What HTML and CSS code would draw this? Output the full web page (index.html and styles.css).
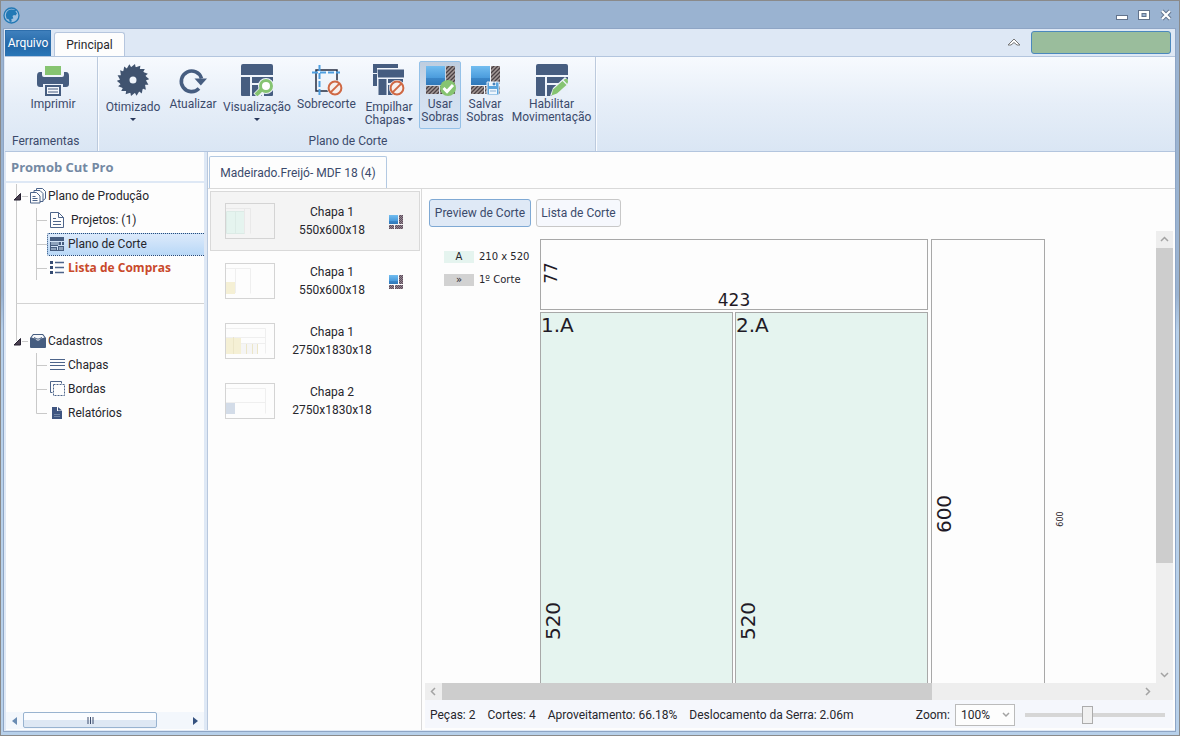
FILE: index.html
```html
<!DOCTYPE html>
<html lang="pt-BR">
<head>
<meta charset="utf-8">
<title>Promob Cut Pro</title>
<link rel="stylesheet" href="styles.css">
</head>
<body>
<svg class="defs" aria-hidden="true">
  <defs>
    <linearGradient id="blue" x1="0" y1="0" x2="0" y2="1">
      <stop offset="0" stop-color="#72bdf0"/><stop offset=".64" stop-color="#4a9bdc"/><stop offset=".65" stop-color="#3a86c8"/><stop offset="1" stop-color="#2f78b9"/>
    </linearGradient>
    <pattern id="hatch" width="4" height="4" patternUnits="userSpaceOnUse">
      <rect width="4" height="4" fill="#a39896"/><path d="M-1 5L5 -1M-1 1L1 -1M3 5L5 3" stroke="#4a4044" stroke-width="1.3"/>
    </pattern>
    <pattern id="weave" width="2" height="2" patternUnits="userSpaceOnUse">
      <rect width="2" height="2" fill="#958791"/><path d="M0 0h1v1H0zM1 1h1v1H1z" fill="#5d4c5c"/>
    </pattern>
    <symbol id="scraps" viewBox="0 0 30 30">
      <rect x="0" y="1" width="19" height="19" fill="url(#blue)"/>
      <path d="M20 1h9v18h-9zM0 21h13v8H0zM14 21h15v8H14z" fill="url(#hatch)"/>
    </symbol>
    <symbol id="scrap-small" viewBox="0 0 15 15">
      <rect width="9" height="9" y="1" fill="url(#blue)"/>
      <path d="M10 1h4v9h-4zM0 11h5v4H0zM6 11h8v4H6z" fill="url(#weave)"/>
    </symbol>
    <symbol id="panels" viewBox="0 0 32 32">
      <path d="M0 2q0-2 2-2h28q2 0 2 2v9H0zM0 13h9v19H1q-1 0-1-1zM11 13h21v6H11zM11 21h10v11H11zM23 21h9v10q0 1-1 1h-8z"/>
    </symbol>
    <symbol id="forbid" viewBox="0 0 16 16">
      <circle cx="8" cy="8" r="8" fill="#eef3fa"/><circle cx="8" cy="8" r="6.4" fill="#f6f0ee" stroke="#cf6844" stroke-width="2"/><path d="M3.6 12.4l8.8-8.8" stroke="#cf6844" stroke-width="2"/>
    </symbol>
  </defs>
</svg>
<div class="window">
  <header class="titlebar">
    <svg class="logo" width="17" height="17" viewBox="0 0 17 17"><circle cx="8.500" cy="8.500" r="7.500" fill="#9fc0df" stroke="#2279b5" stroke-width="1.300"/><path d="M3.500 11.500L2.800 8Q3.500 3 8 2.500L13.500 3l-1 1.500 1.500 2-1.500 2-1.500-.5-1.500 1 .8 2.500-2 .5.500 2.500-2 .5-.8-2.500z" fill="#2279b5"/></svg>
    <div class="controls">
      <button type="button" aria-label="Minimizar"><svg width="13" height="12"><rect x=".5" y="6.500" width="11" height="4" fill="#fff" stroke="#62738c"/></svg></button>
      <button type="button" aria-label="Maximizar"><svg width="13" height="12"><rect x=".5" y="1.500" width="11" height="9" fill="#fff" stroke="#62738c"/><rect x="4" y="4.500" width="4" height="3" fill="#9ab3d1" stroke="#62738c"/></svg></button>
      <button type="button" aria-label="Fechar"><svg width="13" height="12"><path d="M2 2l8 8M10 2l-8 8" stroke="#62738c" stroke-width="4"/><path d="M2 2l8 8M10 2l-8 8" stroke="#fff" stroke-width="2.200"/></svg></button>
    </div>
  </header>

  <div class="frame">
    <nav class="tabs">
      <button type="button" class="file-tab">Arquivo</button>
      <button type="button" class="ribbon-tab">Principal</button>
      <button type="button" class="collapse" aria-label="Recolher"><svg width="14" height="8" viewBox="0 0 14 8"><path d="M1 7L7 1l6 6h-3L7 4.500 4 7z" fill="#fff" stroke="#777" stroke-width="1"/></svg></button>
      <div class="license"></div>
    </nav>

    <div class="ribbon">
      <section class="group tools">
        <div class="group-items">
          <button type="button" class="tool">
            <svg width="32" height="32" viewBox="0 0 32 32"><path d="M8 2h16v9H8z" fill="#86c471"/><path d="M3 8h2v3q0 2 2 2h18q2 0 2-2V8h2q3 0 3 4v8q0 3-3 3h-3v-3H6v3H3q-3 0-3-3v-8q0-4 3-4z" fill="#465d80"/><path d="M9 22h14v9H9z" fill="#f4f7fb" stroke="#465d80" stroke-width="2"/><path d="M11 25h10M11 28h10" stroke="#465d80" stroke-width="1.200"/></svg>
            <span>Imprimir</span>
          </button>
        </div>
        <h2>Ferramentas</h2>
      </section>
      <section class="group cutting">
        <div class="group-items">
          <button type="button" class="tool low">
            <svg width="32" height="32" viewBox="0 0 32 32"><g fill="#40536f"><path fill-rule="evenodd" d="M16 3a13 13 0 1 0 0 26a13 13 0 1 0 0-26zM16 12.500a3.500 3.500 0 1 1 0 7a3.500 3.500 0 1 1 0-7z"/><g id="teeth"><path id="tooth" d="M13 4L18 0l1 5z"/><use href="#tooth" transform="rotate(20 16 16)"/><use href="#tooth" transform="rotate(40 16 16)"/><use href="#tooth" transform="rotate(60 16 16)"/><use href="#tooth" transform="rotate(80 16 16)"/><use href="#tooth" transform="rotate(100 16 16)"/></g><use href="#teeth" transform="rotate(120 16 16)"/><use href="#teeth" transform="rotate(240 16 16)"/></g></svg>
            <span>Otimizado</span><i class="arrow"></i>
          </button>
          <button type="button" class="tool">
            <svg width="32" height="32" viewBox="0 0 32 32"><path d="M22 24.500A10.300 10.300 0 1 1 24.500 14.500" fill="none" stroke="#465d80" stroke-width="3.600"/><path d="M17.500 14.500H30l-6.200 7z" fill="#465d80"/></svg>
            <span>Atualizar</span>
          </button>
          <button type="button" class="tool low">
            <svg width="32" height="32" viewBox="0 0 32 32"><use href="#panels" fill="#465d80"/><path d="M15 32l6-6" stroke="#eef3fa" stroke-width="7"/><circle cx="25" cy="22" r="8" fill="#eef3fa"/><path d="M15 31l6-6" stroke="#86c471" stroke-width="4"/><circle cx="25" cy="22" r="5.500" fill="#fff" stroke="#86c471" stroke-width="3"/></svg>
            <span>Visualização</span><i class="arrow"></i>
          </button>
          <button type="button" class="tool">
            <svg width="32" height="32" viewBox="0 0 32 32"><path d="M5 6h21v21H5z" fill="none" stroke="#252d40" stroke-width="1.500"/><path d="M8.500 1v30M1 8.500h28" stroke="#4d9ee0" stroke-width="2" stroke-dasharray="6 2"/><use href="#forbid" x="16" y="16" width="16" height="16"/></svg>
            <span>Sobrecorte</span>
          </button>
          <button type="button" class="tool low">
            <svg width="32" height="32" viewBox="0 0 32 32"><g fill="#465d80"><path d="M0 0h25v4H4v5H0zM0 10h4v12H0zM4.500 5.500H31v8h-26zM5.500 15h8v16h-8zM15 15h15v4H15zM15 21h6v10h-6z"/></g><use href="#forbid" x="16" y="16" width="16" height="16"/></svg>
            <span>Empilhar<br>Chapas<i class="arrow inline"></i></span>
          </button>
          <button type="button" class="tool active">
            <svg width="32" height="32" viewBox="0 0 32 32"><use href="#scraps" width="30" height="30" x="2" y="1"/><circle cx="24" cy="24" r="8" fill="#86c471"/><path d="M19.500 24l3.500 3.500 6-6.500" fill="none" stroke="#fff" stroke-width="3"/></svg>
            <span>Usar<br>Sobras</span>
          </button>
          <button type="button" class="tool">
            <svg width="32" height="32" viewBox="0 0 32 32"><use href="#scraps" width="30" height="30" x="2" y="1"/><path d="M18 18h12v13H18z" fill="#5aa4dc" stroke="#e7eef8"/><path d="M20 18h7v4h-7zM20 25h8v5h-8z" fill="#eef6fd"/><path d="M24 19h2v2h-2zM21 27h6" fill="#4684bd" stroke="#4684bd" stroke-width=".6"/></svg>
            <span>Salvar<br>Sobras</span>
          </button>
          <button type="button" class="tool">
            <svg width="32" height="32" viewBox="0 0 32 32"><use href="#panels" fill="#465d80"/><path d="M15 32l17-15v15z" fill="#e9f0f9"/><path d="M14 32l3-8L29 13l5 5-12 11z" fill="#eef3fa"/><path d="M15.500 31.500l1.500-6L26.500 17l4 4-9.500 8.500z" fill="#86c471"/><path d="M27.500 16l1.500-1q3-1 3 3l-.8 2z" fill="#86c471"/></svg>
            <span>Habilitar<br>Movimentação</span>
          </button>
        </div>
        <h2>Plano de Corte</h2>
      </section>
    </div>

    <div class="workspace">
      <aside class="sidebar">
        <h1>Promob Cut Pro</h1>
        <div class="tree">
          <a href="#" class="node root"><svg class="twig" width="17" height="24"><path d="M4.500 0v24M10 12.500h6" stroke="#c9c9c9"/><path d="M2 16l6.500-6.500V16z" fill="#4a4050" stroke="#252030"/></svg><svg width="16" height="16" fill="#fdfdfd" stroke="#4d648a"><path d="M6.500.5h6l3 3v7l-2 1.500h-7z"/><path d="M4 2.500h6l3 3v8H4z"/><path d="M.5 4.500h6l3.500 3.500v7H.5z"/><path d="M2.500 8.500h3M2.500 10.500h5M2.500 12.500h5"/></svg><span>Plano de Produção</span></a>
          <a href="#" class="node"><svg class="twig" width="35" height="24"><path d="M4.500 0v24M24.500 0v24M25 12.500h10" stroke="#c9c9c9"/></svg><svg width="16" height="16" fill="#fdfdfd" stroke="#4d648a"><path d="M.5.500h8l5 5v10H.5z"/><path d="M8.500.500v5h5M3 6.500h3M3 9.500h8M3 12.500h8" fill="none"/></svg><span class="wide">Projetos: (1)</span></a>
          <a href="#" class="node selected"><svg class="twig" width="35" height="24"><path d="M4.500 0v24M24.500 0v24M25 12.500h10" stroke="#c9c9c9"/></svg><span class="pick"><svg width="16" height="16"><path d="M0 1h14v14H0z" fill="#465d80"/><path d="M0 5.500h14M1 10.500h6M8 9.500h6M7.500 10v4M11.500 6v4" stroke="#cfe1f5"/><path d="M1 6h8v3H1zM1 12h5v2H1zM9 11h4v3H9z" fill="#8da2bc"/></svg><span>Plano de Corte</span></span></a>
          <a href="#" class="node alert"><svg class="twig" width="35" height="24"><path d="M4.500 0v24M24.500 0v24M25 12.500h10" stroke="#c9c9c9"/></svg><svg width="16" height="16"><path d="M0 1h3v3H0zM0 6h3v3H0zM0 11h3v3H0z" fill="#354b72"/><path d="M5 2.500h9M5 7.500h9M5 12.500h9" stroke="#4d648a" stroke-width="1.500"/></svg><span>Lista de Compras</span></a>
          <div class="divider"></div>
          <div class="stem"></div>
          <a href="#" class="node root"><svg class="twig" width="17" height="24"><path d="M4.500 0v12M10 12.500h6" stroke="#c9c9c9"/><path d="M2 16l6.500-6.500V16z" fill="#4a4050" stroke="#252030"/></svg><svg width="16" height="16"><path d="M0 5l3-4h10l3 4v9q0 1-1 1H1q-1 0-1-1z" fill="#465d80"/><path d="M1.500 4.500L3.500 2h9l2 2.500-3.500 1-2 2H7l-2-2z" fill="#f6f8fb"/><path d="M4 4.500l3 1.500h2l3-1.500" fill="none" stroke="#465d80"/></svg><span>Cadastros</span></a>
          <a href="#" class="node"><svg class="twig" width="35" height="24"><path d="M24.500 0v24M25 12.500h10" stroke="#c9c9c9"/></svg><svg width="16" height="16" stroke="#4d648a"><path d="M0 2.500h15M0 5.500h15M0 8.500h15M0 12.500h15"/></svg><span>Chapas</span></a>
          <a href="#" class="node"><svg class="twig" width="35" height="24"><path d="M24.500 0v24M25 12.500h10" stroke="#c9c9c9"/></svg><svg width="16" height="16" fill="none" stroke="#4d648a"><path d="M2.500 11.500h-2V.5h11v2"/><path d="M3.500 3.500h11v11h-11z" stroke-dasharray="2 1"/></svg><span>Bordas</span></a>
          <a href="#" class="node"><svg class="twig" width="35" height="24"><path d="M24.500 0v12.500H35" fill="none" stroke="#c9c9c9"/></svg><svg width="16" height="16"><path d="M2 2h5v4h5v8H2z" fill="#3f5580"/><path d="M8 2l4 3.500H8z" fill="#3f5580"/><path d="M4 9.500h6M4 11.500h6" stroke="#7286a5"/></svg><span>Relatórios</span></a>
        </div>
        <div class="side-scroll">
          <button type="button" aria-label="Esquerda"><svg width="5" height="8"><path d="M5 0v8L0 4z" fill="#6a8cb3"/></svg></button>
          <div class="side-track"><div class="side-thumb"><svg width="7" height="7"><path d="M1 0v7M3.500 0v7M6 0v7" stroke="#3c4c6d"/></svg></div></div>
          <button type="button" aria-label="Direita"><svg width="5" height="8"><path d="M0 0v8l5-4z" fill="#35527f"/></svg></button>
        </div>
      </aside>

      <main class="document">
        <div class="doc-tabs"><button type="button" class="doc-tab">Madeirado.Freijó- MDF 18 (4)</button></div>
        <div class="doc-body">
          <div class="sheets">
            <button type="button" class="sheet current">
              <svg class="thumb" width="50" height="36"><path d="M.5 7.500h18V29.500H.5zM9.500 7.500v22" fill="#e5f4ef" stroke="#dcebe6"/><path d="M0 4.500h24.500v25M18.500 4v25" fill="none" stroke="#e9e9e9"/></svg>
              <span>Chapa 1<br>550x600x18</span><svg width="15" height="15"><use href="#scrap-small" width="15" height="15"/></svg>
            </button>
            <button type="button" class="sheet">
              <svg class="thumb" width="50" height="36"><path d="M0 18h9v12H0z" fill="#f5f0d5"/><path d="M0 4.500h24.500v25M9.500 4v25" fill="none" stroke="#efefef"/></svg>
              <span>Chapa 1<br>550x600x18</span><svg width="15" height="15"><use href="#scrap-small" width="15" height="15"/></svg>
            </button>
            <button type="button" class="sheet">
              <svg class="thumb" width="50" height="36"><path d="M0 13h15v17H0z" fill="#f5f0d5"/><path d="M15 20h17v10H15z" fill="#f5f5f5"/><path d="M0 4.500h39.500v25M0 13.500h39M15 19.500h24" fill="none" stroke="#efefef"/><path d="M7.500 13v17M20.500 20v10M26.500 20v10M31.500 20v10" stroke="#ece6c8"/></svg>
              <span>Chapa 1<br>2750x1830x18</span>
            </button>
            <button type="button" class="sheet">
              <svg class="thumb" width="50" height="36"><path d="M0 19h9v11H0z" fill="#d3dce8"/><path d="M0 4.500h39.500v25M0 18.500h39" fill="none" stroke="#efefef"/></svg>
              <span>Chapa 2<br>2750x1830x18</span>
            </button>
          </div>

          <section class="preview">
            <div class="modes">
              <button type="button" class="mode on">Preview de Corte</button>
              <button type="button" class="mode">Lista de Corte</button>
            </div>
            <div class="viewport">
              <div class="canvas">
                <dl class="legend">
                  <dt class="piece">A</dt><dd>210 x 520</dd>
                  <dt class="cut">»</dt><dd>1º Corte</dd>
                </dl>
                <svg class="plan" width="560" height="620">
                  <g fill="#fdfdfd" stroke="#a8a8a8">
                    <rect x=".5" y=".5" width="387" height="70"/>
                    <rect x=".5" y="73.500" width="192" height="527" fill="#e5f4ef"/>
                    <rect x="195.500" y="73.500" width="192" height="527" fill="#e5f4ef"/>
                    <rect x="391.500" y=".5" width="113" height="600"/>
                  </g>
                  <g class="marks">
                    <text x="194" y="67" class="mid" text-anchor="middle">423</text>
                    <text transform="translate(17 34) rotate(-90)" class="mid" text-anchor="middle">77</text>
                    <text x="1" y="93">1.A</text>
                    <text x="196" y="93">2.A</text>
                    <text transform="translate(20 382) rotate(-90)" text-anchor="middle">520</text>
                    <text transform="translate(215 382) rotate(-90)" text-anchor="middle">520</text>
                    <text transform="translate(411 275) rotate(-90)" text-anchor="middle">600</text>
                    <text transform="translate(523 280) rotate(-90)" class="small" text-anchor="middle">600</text>
                  </g>
                </svg>
              </div>
              <div class="vscroll">
                <svg width="17" height="17"><path d="M5 10l3.500-3.500L12 10" class="chev"/></svg>
                <div class="vthumb"></div><div class="vrest"></div>
                <svg width="17" height="17"><path d="M5 7l3.500 3.500L12 7" class="chev"/></svg>
              </div>
            </div>
            <div class="hscroll">
              <svg width="17" height="17"><path d="M10 5L6.500 8.500 10 12" class="chev"/></svg>
              <div class="hthumb"></div><div class="hrest"></div>
              <svg width="17" height="17"><path d="M7 5l3.500 3.500L7 12" class="chev"/></svg>
            </div>
            <footer class="status">
              <span>Peças: 2</span><span>Cortes: 4</span><span>Aproveitamento: 66.18%</span><span>Deslocamento da Serra: 2.06m</span>
              <label class="zoom-label" for="zoom">Zoom:</label>
              <span class="select"><select id="zoom"><option>100%</option></select><svg width="8" height="6"><path d="M1 1l3 3 3-3" class="chev"/></svg></span>
              <input type="range" min="0" max="100" value="44" aria-label="Zoom">
            </footer>
          </section>
        </div>
      </main>
    </div>
  </div>
</div>
</body>
</html>
```
FILE: styles.css
```css
* { box-sizing: border-box; }
body { margin: 0; font: 12px/16px Roboto, "Open Sans", sans-serif; color: #26262c; }
button, select { font: inherit; color: inherit; background: none; border: 0; padding: 0; margin: 0; }
h1, h2, dl, dt, dd { margin: 0; }
svg { display: block; flex: none; }
a { color: inherit; text-decoration: none; }
.defs { position: absolute; width: 0; height: 0; }

.window { height: 100vh; display: flex; flex-direction: column; border: 1px solid #8a8a8a; background: linear-gradient(#9ab3d1, #9ab3d1 40%, #b7d0ea 45%); }
.titlebar { height: 27px; flex: none; display: flex; align-items: center; justify-content: space-between; padding: 1px 6px 0 2px; background: #9ab3d1; }
.controls { display: flex; gap: 9px; }

.frame { flex: 1; min-height: 0; display: flex; flex-direction: column; margin: 0 3px 3px 2px; border: 1px solid #8ea5c5; background: #dee8f5; padding: 0 0 1px 1px; }
.tabs { height: 27px; flex: none; display: flex; align-items: flex-end; padding-right: 4px; }
.file-tab { width: 46px; height: 26px; color: #fff; background: linear-gradient(#3f80bd, #2368a8 60%, #2a77b8); border: 1px solid #2d6eac; border-bottom: 0; align-self: center; margin-right: 3px; }
.ribbon-tab { width: 71px; height: 24px; background: #fdfdfd; border: 1px solid #b6c6de; border-bottom: 0; border-radius: 3px 3px 0 0; }
.collapse { margin: 0 10px 10px auto; }
.license { width: 140px; height: 23px; margin-bottom: 2px; background: #9abd9c; border: 1px solid #4b88bd; border-radius: 3px; }

.ribbon { height: 96px; flex: none; display: flex; padding-left: 1px; border-top: 1px solid #b3c5de; border-bottom: 1px solid #b3c5de; background: linear-gradient(#f7fafe, #e6eef8 50%, #dae6f4); color: #3b4a6b; }
.group { display: flex; flex-direction: column; justify-content: space-between; border-right: 1px solid #bccadd; box-shadow: 1px 0 #fafcff; }
.group h2 { font-size: 12px; line-height: 16px; font-weight: 400; padding: 0 0 2px 6px; }
.tools { width: 92px; }
.cutting { padding: 0 1px 0 4px; }
.cutting .group-items + h2 { text-align: center; padding-left: 0; }
.group-items { display: flex; gap: 2px; padding-top: 4px; height: 73px; }
.tool { width: 54px; height: 68px; display: flex; flex-direction: column; align-items: center; line-height: 13px; padding-top: 3px; white-space: nowrap; border-radius: 2px; }
.tool span { margin-top: 2px; }
.tool.low span { margin-top: 5px; }
.tools .tool { margin-left: 20px; }
.cutting .tool:nth-child(1) { width: 62px; }
.cutting .tool:nth-child(3) { width: 70px; }
.cutting .tool:nth-child(4) { width: 65px; }
.cutting .tool:nth-child(5) { width: 56px; }
.cutting .tool:nth-child(6) { width: 42px; }
.cutting .tool:nth-child(7) { width: 44px; }
.cutting .tool:nth-child(8) { width: 85px; }
.tool.active { background: linear-gradient(#becddf, #d3dfee 50%, #d5e4f5); border: 1px solid #94c1e8; padding-top: 2px; }
.arrow { border: 3px solid transparent; border-top-color: #28375a; border-bottom: 0; margin-top: 4px; }
.arrow.inline { display: inline-block; margin: 0 0 3px 2px; }

.workspace { flex: 1; min-height: 0; display: flex; padding-left: 1px; }
.sidebar { width: 198px; flex: none; display: flex; flex-direction: column; background: #fdfdfd; }
.sidebar h1 { height: 31px; flex: none; padding: 7px 5px; font: 700 13px/16px "Open Sans", sans-serif; color: #7489a3; border-bottom: 2px solid #dee8f5; }
.tree { flex: 1; padding: 1px 0 0 6px; }
.node { display: flex; align-items: center; height: 24px; white-space: nowrap; }
.node svg + svg { margin-left: 3px; }
.node.root svg + svg { margin-left: 1px; }
.node span { margin-left: 2px; }
.node .wide { margin-left: 5px; }
.node.alert { font-family: "Open Sans", sans-serif; font-weight: 700; color: #c9492b; }
.twig { align-self: stretch; }
.node .pick { flex: 1; height: 23px; margin: 0; padding-left: 2px; display: flex; align-items: center; border: 1px dotted #294b78; border-right: 0; border-radius: 2px 0 0 2px; background: linear-gradient(#dceafb, #b9d8f7); }
.divider { height: 24px; margin-left: 4px; border-left: 1px solid #c9c9c9; border-bottom: 1px solid #d3d3d3; }
.stem { height: 25px; margin-left: 4px; border-left: 1px solid #c9c9c9; }
.side-scroll { height: 17px; margin-bottom: 1px; display: flex; background: #f3f7fc; }
.side-scroll button { width: 17px; display: grid; place-items: center; }
.side-track { flex: 1; }
.side-thumb { width: 82%; height: 16px; display: grid; place-items: center; border: 1px solid #98b3d0; border-radius: 2px; background: linear-gradient(#fafcff 50%, #dee8f4 50%); }

.document { flex: 1; min-width: 0; margin-left: 3px; display: flex; flex-direction: column; background: #fdfdfd; border-left: 1px solid #b9c8dd; }
.doc-tabs { height: 37px; flex: none; padding: 4px 0 0 1px; border-bottom: 1px solid #d9d9d9; }
.doc-tab { width: 178px; height: 32px; color: #3b4a6b; border: 1px solid #b3c9e2; border-bottom: 0; border-radius: 2px 2px 0 0; }
.doc-body { flex: 1; min-height: 0; display: flex; }
.sheets { width: 214px; flex: none; padding: 2px 1px 0 2px; border-right: 1px solid #d9d9d9; }
.sheet { width: 100%; height: 60px; display: grid; grid-template-columns: 50px 1fr 15px; align-items: center; padding: 0 15px 0 14px; line-height: 18px; border: 1px solid transparent; text-align: center; }
.sheet.current { background: #f4f4f4; border-color: #d9d9d9; }
.thumb { border: 1px solid #d4d4d4; }

.preview { flex: 1; min-width: 0; display: flex; flex-direction: column; padding: 0 2px 2px 3px; }
.modes { display: flex; gap: 5px; flex: none; padding: 10px 4px 4px; }
.mode { width: 85px; height: 28px; border: 1px solid #c8c8c8; border-radius: 3px; background: #f6f8fd; color: #3b4a6b; }
.mode.on { width: 102px; background: #dfe9f6; border-color: #7fa9d4; }
.viewport { flex: 1; min-height: 0; display: flex; }
.canvas { flex: 1; min-width: 0; overflow: hidden; display: flex; padding-top: 8px; }
.legend { width: 115px; flex: none; display: grid; grid-template-columns: 30px 1fr; gap: 11px 5px; align-content: start; padding: 12px 0 0 19px; font: 10px/12px "DejaVu Sans", sans-serif; white-space: nowrap; }
.legend dt { text-align: center; }
.piece { background: #e5f4ef; }
.cut { background: #d2d2d2; }
.marks { font: 20px "DejaVu Sans", sans-serif; fill: #1f1a26; }
.mid { font-size: 17px; }
.small { font-size: 8px; }
.chev { fill: none; stroke: #a3a3a3; stroke-width: 1.5; }
.vscroll { width: 17px; flex: none; display: flex; flex-direction: column; background: #eee; }
.vthumb { flex: 315; background: #cdcdcd; }
.vrest { flex: 103; }
.hscroll { height: 17px; flex: none; display: flex; padding-right: 17px; background: #eee; }
.hthumb { flex: 491; background: #cdcdcd; }
.hrest { flex: 207; }
.status { height: 28px; flex: none; display: flex; align-items: center; gap: 12px; padding: 1px 8px 0 5px; background: #f5f7fc; white-space: nowrap; }
.zoom-label { margin: 0 -7px 0 auto; }
.select { display: grid; align-items: center; width: 60px; height: 22px; border: 1px solid #bbb; background: #fdfdfd; }
.select > * { grid-area: 1 / 1; }
.select select { width: 100%; appearance: none; padding-left: 5px; }
.select svg { justify-self: end; margin-right: 4px; pointer-events: none; }
input[type="range"] { appearance: none; width: 140px; height: 18px; margin: 0 0 0 -2px; background: linear-gradient(#d6d6d6, #d6d6d6) center / 100% 4px no-repeat; }
input[type="range"]::-webkit-slider-thumb { appearance: none; width: 11px; height: 18px; background: #f0f0f0; border: 1px solid #acacac; }
```
